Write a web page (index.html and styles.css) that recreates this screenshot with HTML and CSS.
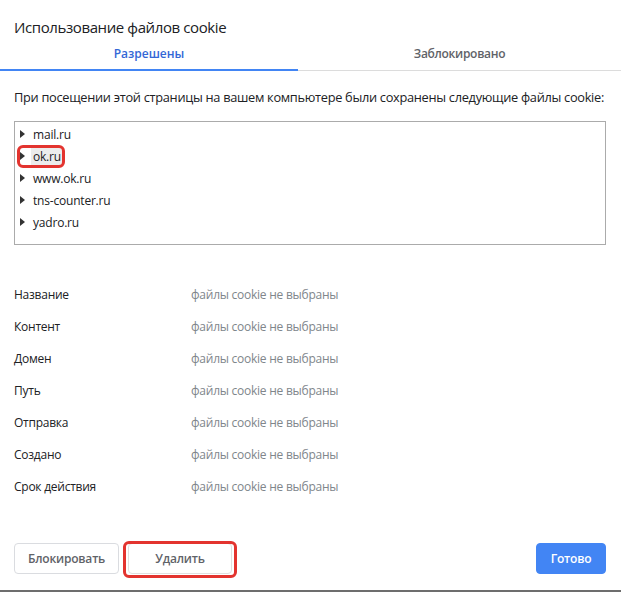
FILE: index.html
```html
<!DOCTYPE html>
<html>
<head>
    <meta charset="utf-8">
    <link rel="stylesheet" href="styles.css">
</head>
<body>
    <div class="dialog">
        <div class="title">Использование файлов cookie</div>
        <div class="tabs">
            <div class="tab active">Разрешены</div>
            <div class="tab">Заблокировано</div>
        </div>
        <div class="content">
            <p class="intro">При посещении этой страницы на вашем компьютере были сохранены следующие файлы cookie:</p>
            <div class="tree">
                <div class="node"><span class="arrow"></span><span class="name">mail.ru</span></div>
                <div class="node"><span class="arrow"></span><span class="name selected">ok.ru</span><span class="mark mark-node"></span></div>
                <div class="node"><span class="arrow"></span><span class="name">www.ok.ru</span></div>
                <div class="node"><span class="arrow"></span><span class="name">tns-counter.ru</span></div>
                <div class="node"><span class="arrow"></span><span class="name">yadro.ru</span></div>
            </div>
            <div class="details">
                <div class="row"><span class="label">Название</span><span class="value">файлы cookie не выбраны</span></div>
                <div class="row"><span class="label">Контент</span><span class="value">файлы cookie не выбраны</span></div>
                <div class="row"><span class="label">Домен</span><span class="value">файлы cookie не выбраны</span></div>
                <div class="row"><span class="label">Путь</span><span class="value">файлы cookie не выбраны</span></div>
                <div class="row"><span class="label">Отправка</span><span class="value">файлы cookie не выбраны</span></div>
                <div class="row"><span class="label">Создано</span><span class="value">файлы cookie не выбраны</span></div>
                <div class="row"><span class="label">Срок действия</span><span class="value">файлы cookie не выбраны</span></div>
            </div>
        </div>
        <div class="footer">
            <button class="btn">Блокировать</button>
            <div class="marked">
                <button class="btn btn-wide">Удалить</button>
                <span class="mark mark-btn"></span>
            </div>
            <button class="btn btn-primary">Готово</button>
        </div>
    </div>
    <div class="edge"></div>
</body>
</html>
```

FILE: styles.css
```css
html, body {
    margin: 0;
    padding: 0;
    background: #fff;
    font-family: "Open Sans", "Noto Sans", Arial, sans-serif;
    color: #202124;
}

.dialog {
    width: 621px;
    height: 590px;
    display: flex;
    flex-direction: column;
    box-sizing: border-box;
}

.title {
    font-size: 15px;
    line-height: 20px;
    padding: 17px 14px 0;
    letter-spacing: -0.4px;
}

.tabs {
    display: grid;
    grid-template-columns: 298px 1fr;
    margin-top: 4px;
    border-bottom: 1px solid #dcdcdc;
}

.tab {
    text-align: center;
    font-size: 12px;
    font-weight: 600;
    color: #5f6368;
    height: 28px;
    line-height: 26px;
    margin-bottom: -1px;
    border-bottom: 2px solid transparent;
}

.tab + .tab {
    letter-spacing: -0.3px;
}

.tab.active {
    color: #3367d6;
    border-bottom-color: #4285f4;
}

.content {
    padding: 0 15px 0 14px;
    flex: 1;
}

.intro {
    margin: 17px 0 0;
    font-size: 12.8px;
    line-height: 18px;
    letter-spacing: -0.3px;
    white-space: nowrap;
}

.tree {
    margin-top: 15px;
    height: 124px;
    box-sizing: border-box;
    border: 1px solid #ababab;
    padding-top: 1px;
}

.node {
    height: 22px;
    display: flex;
    align-items: center;
    font-size: 12px;
    position: relative;
    padding-left: 5px;
}

.arrow {
    width: 0;
    height: 0;
    border-top: 4px solid transparent;
    border-bottom: 4px solid transparent;
    border-left: 5px solid #333;
    margin-right: 6px;
}

.name {
    padding: 1px 2px;
    letter-spacing: -0.2px;
}

.name.selected {
    background: #ececec;
}

.mark {
    position: absolute;
    border: 3px solid #e3342f;
    border-radius: 6px;
    pointer-events: none;
}

.mark-node {
    left: 2px;
    top: 0px;
    width: 42px;
    height: 17px;
}

.details {
    margin-top: 33px;
}

.row {
    display: grid;
    grid-template-columns: 177px 1fr;
    height: 32px;
    align-items: center;
    font-size: 12px;
    letter-spacing: -0.25px;
}

.value {
    color: #80868b;
}

.footer {
    display: flex;
    align-items: center;
    padding: 0 15px 16px 14px;
}

.btn {
    font-family: inherit;
    font-size: 12px;
    font-weight: 600;
    color: #5f6368;
    background: #fff;
    border: 1px solid #dadce0;
    border-radius: 4px;
    height: 31px;
    width: 105px;
    padding: 0;
    letter-spacing: -0.2px;
}

.marked {
    position: relative;
    margin-left: 9px;
}

.btn-wide {
    width: 104px;
    border-color: #e0e0e0;
}

.mark-btn {
    left: -5px;
    top: -2px;
    width: 108px;
    height: 31px;
}

.btn-primary {
    margin-left: auto;
    width: 70px;
    background: #4285f4;
    border-color: #4285f4;
    color: #fff;
}

.edge {
    height: 2px;
    background: #6d6d6d;
}
```
